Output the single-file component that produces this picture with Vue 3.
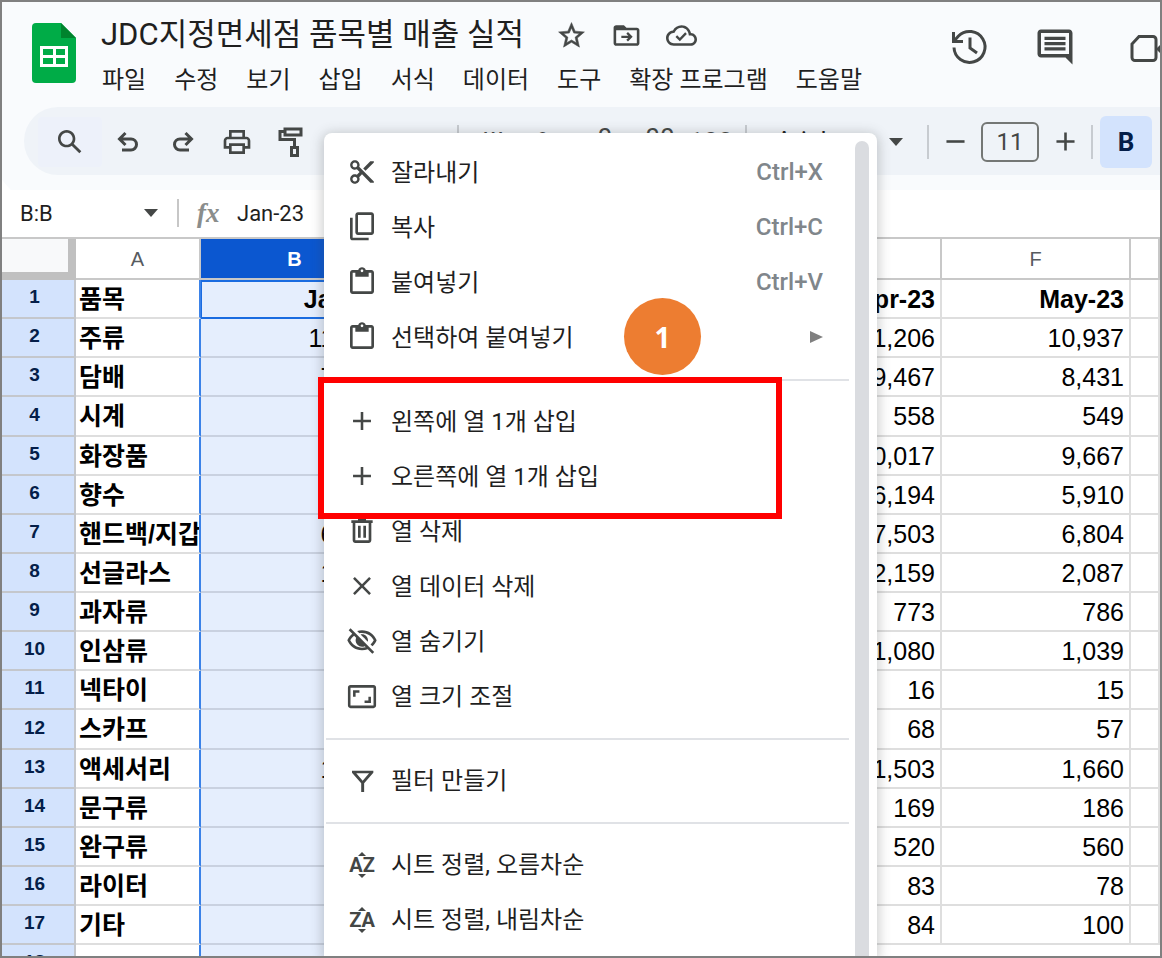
<script setup>
import { ref } from 'vue'

const menus = ['파일', '수정', '보기', '삽입', '서식', '데이터', '도구', '확장 프로그램', '도움말']

const rows = [
  ['품목', 'Jan-23', 'Apr-23', 'May-23'],
  ['주류', '11,206', '11,206', '10,937'],
  ['담배', '7,467', '9,467', '8,431'],
  ['시계', '558', '558', '549'],
  ['화장품', '9,017', '10,017', '9,667'],
  ['향수', '6,194', '6,194', '5,910'],
  ['핸드백/지갑', '6,503', '7,503', '6,804'],
  ['선글라스', '1,159', '2,159', '2,087'],
  ['과자류', '773', '773', '786'],
  ['인삼류', '980', '1,080', '1,039'],
  ['넥타이', '16', '16', '15'],
  ['스카프', '68', '68', '57'],
  ['액세서리', '1,503', '1,503', '1,660'],
  ['문구류', '169', '169', '186'],
  ['완구류', '520', '520', '560'],
  ['라이터', '83', '83', '78'],
  ['기타', '84', '84', '100'],
  ['', '', '', ''],
]

const groups = [
  [
    { icon: 'cut', label: '잘라내기', key: 'Ctrl+X' },
    { icon: 'copy', label: '복사', key: 'Ctrl+C' },
    { icon: 'paste', label: '붙여넣기', key: 'Ctrl+V' },
    { icon: 'paste', label: '선택하여 붙여넣기', sub: true },
  ],
  [
    { icon: 'plus', label: '왼쪽에 열 1개 삽입' },
    { icon: 'plus', label: '오른쪽에 열 1개 삽입' },
    { icon: 'trash', label: '열 삭제' },
    { icon: 'close', label: '열 데이터 삭제' },
    { icon: 'hide', label: '열 숨기기' },
    { icon: 'resize', label: '열 크기 조절' },
  ],
  [{ icon: 'filter', label: '필터 만들기' }],
  [
    { sort: 'AZ', label: '시트 정렬, 오름차순' },
    { sort: 'ZA', label: '시트 정렬, 내림차순' },
  ],
]

const boxes = {
  cut: '-1.5 -1.5 27 27',
  plus: '-0.5 -0.5 25 25',
  close: '-0.5 -0.5 25 25',
  resize: '-0.5 -1 25 25',
}

const paths = {
  cut: 'M9.64 7.64c.23-.5.36-1.05.36-1.64 0-2.21-1.79-4-4-4S2 3.79 2 6s1.79 4 4 4c.59 0 1.14-.13 1.64-.36L10 12l-2.36 2.36C7.14 14.13 6.59 14 6 14c-2.21 0-4 1.79-4 4s1.79 4 4 4 4-1.79 4-4c0-.59-.13-1.14-.36-1.64L12 14l7 7h3v-1L9.64 7.64zM6 8c-1.1 0-2-.89-2-2s.9-2 2-2 2 .89 2 2-.9 2-2 2zm0 12c-1.1 0-2-.89-2-2s.9-2 2-2 2 .89 2 2-.9 2-2 2zM19 3l-6 6 2 2 7-7V3z',
  copy: 'M19 1H9C7.9 1 7 1.9 7 3v13c0 1.1.9 2 2 2h10c1.1 0 2-.9 2-2V3c0-1.1-.9-2-2-2zm0 15H9V3h10v13zM3 5v15c0 1.1.9 2 2 2h12v-2H5V5H3z',
  paste: 'M19 3h-4.18C14.4 1.84 13.3 1 12 1s-2.4.84-2.82 2H5c-1.1 0-2 .9-2 2v14c0 1.1.9 2 2 2h14c1.1 0 2-.9 2-2V5c0-1.1-.9-2-2-2zm-7-.4c.6 0 1 .4 1 1s-.4 1-1 1-1-.4-1-1 .4-1 1-1zM19 19H5V5h2v3h10V5h2v14z',
  plus: 'M19 13h-6v6h-2v-6H5v-2h6V5h2v6h6v2z',
  trash: 'M15 4V3H9v1H4v2h1v13c0 1.1.9 2 2 2h10c1.1 0 2-.9 2-2V6h1V4h-5zm2 15H7V6h10v13zM9 8h2v9H9zm4 0h2v9h-2z',
  close: 'M19 6.41L17.59 5 12 10.59 6.41 5 5 6.41 10.59 12 5 17.59 6.41 19 12 13.41 17.59 19 19 17.59 13.41 12z',
  hide: 'M12 6c3.79 0 7.17 2.13 8.82 5.5-.59 1.22-1.42 2.27-2.41 3.12l1.41 1.41c1.39-1.23 2.49-2.77 3.18-4.53C21.27 7.11 17 4 12 4c-1.27 0-2.49.2-3.64.57l1.65 1.65C10.66 6.09 11.32 6 12 6zm-1.07 1.14L13 9.21c.57.25 1.03.71 1.28 1.28l2.07 2.07c.08-.34.14-.7.14-1.07C16.5 9.01 14.48 7 12 7c-.37 0-.72.05-1.07.14zM2.01 3.87l2.68 2.68C3.06 7.83 1.77 9.53 1 11.5 2.73 15.89 7 19 12 19c1.52 0 2.98-.29 4.32-.82l3.42 3.42 1.41-1.41L3.42 2.45 2.01 3.87zm4.1 4.1l1.5 1.5c-.3.8-.4 1.3-.4 2 0 2.6 2.1 4.8 4.8 4.8.7 0 1.3-.1 2-.4l.8.8c-.9.2-1.9.33-2.81.33-3.79 0-7.17-2.13-8.82-5.5.7-1.43 1.72-2.61 2.93-3.53z',
  resize: 'M19 12h-2v3h-3v2h5v-5zM7 9h3V7H5v5h2V9zm14-6H3c-1.1 0-2 .9-2 2v14c0 1.1.9 2 2 2h18c1.1 0 2-.9 2-2V5c0-1.1-.9-2-2-2zm0 16H3V5h18v14z',
  filter: 'M4.5 5h16v1.5l-6.900 8V21h-2.200v-6.500l-6.900-8zm3.200 2l4.800 5.600L17.300 7z',
}

const fontSize = ref('11')
</script>

<template>
  <div class="frame">
    <header class="header">
      <svg class="logo" viewBox="0 0 44 60" aria-hidden="true">
        <path d="M4 0h25l15 15v41a4 4 0 0 1-4 4H4a4 4 0 0 1-4-4V4a4 4 0 0 1 4-4z" fill="#00ac47" />
        <path d="M29 0l15 15H29z" fill="#00832d" />
        <path d="M8 23h28v21H8zM11 26v6h10v-6zM24 26v6h9v-6zM11 35v6h10v-6zM24 35v6h9v-6z" fill="#fff" fill-rule="evenodd" />
      </svg>
      <div class="heading">
        <div class="title-row">
          <h1>JDC지정면세점 품목별 매출 실적</h1>
          <button aria-label="별표">
            <svg width="31" height="31" viewBox="0 0 24 24"><path d="M22 9.24l-7.19-.62L12 2 9.19 8.63 2 9.24l5.46 4.73L5.82 21 12 17.27 18.18 21l-1.63-7.03L22 9.24zM12 15.4l-3.76 2.27 1-4.28-3.32-2.88 4.38-.38L12 6.1l1.71 4.04 4.38.38-3.32 2.88 1 4.28L12 15.4z" stroke="#444746" stroke-width="0.4" /></svg>
          </button>
          <button aria-label="이동">
            <svg width="31" height="31" viewBox="0 0 24 24"><path d="M20 6h-8l-2-2H4c-1.1 0-2 .9-2 2v12c0 1.1.9 2 2 2h16c1.1 0 2-.9 2-2V8c0-1.1-.9-2-2-2zm0 12H4V8h16v10z" fill-rule="evenodd" /><path d="M8 13h7M12.5 10l3 3-3 3" fill="none" stroke="#444746" stroke-width="1.8" /></svg>
          </button>
          <button aria-label="드라이브에 저장됨">
            <svg width="31" height="31" viewBox="0 0 24 24"><path d="M19.35 10.04C18.67 6.59 15.64 4 12 4 9.11 4 6.6 5.64 5.35 8.04 2.34 8.36 0 10.91 0 14c0 3.31 2.69 6 6 6h13c2.76 0 5-2.24 5-5 0-2.64-2.05-4.78-4.65-4.96zM19 18H6c-2.21 0-4-1.79-4-4 0-2.05 1.53-3.76 3.56-3.97l1.07-.11.5-.95C8.08 7.14 9.94 6 12 6c2.62 0 4.88 1.86 5.39 4.43l.3 1.5 1.53.11c1.56.1 2.78 1.41 2.78 2.96 0 1.65-1.35 3-3 3z" /><path d="M8 12.5l2.7 2.7 4.8-5" fill="none" stroke="#444746" stroke-width="1.8" /></svg>
          </button>
        </div>
        <nav class="menubar">
          <button v-for="m in menus" :key="m">{{ m }}</button>
        </nav>
      </div>
      <div class="actions">
        <button aria-label="버전 기록">
          <svg class="line" width="42" height="42" viewBox="0 0 42 42">
            <path d="M4 21.5a15.5 15.5 0 1 0 4.500-11.500L4 15" /><path d="M3.500 6v9.500H13" /><path d="M20 11.500v10.500l7 5" />
          </svg>
        </button>
        <button aria-label="댓글">
          <svg width="42" height="42" viewBox="0 0 24 24"><path d="M21.99 4c0-1.1-.89-2-1.99-2H4c-1.1 0-2 .9-2 2v12c0 1.1.9 2 2 2h14l4 4-.01-18zM20 4v12H4V4h16zM6 12.2h12v1.8H6zm0-3h12v1.8H6zm0-3h12v1.8H6z" fill-rule="evenodd" /></svg>
        </button>
        <button aria-label="화상 회의">
          <svg width="42" height="42" viewBox="0 0 42 42"><path d="M21 10.5h14a3 3 0 0 1 3 3v18a3 3 0 0 1-3 3H17a3 3 0 0 1-3-3V18z" fill="none" stroke="#444746" stroke-width="3" /><path d="M38 23l4-4v8z" /></svg>
        </button>
      </div>
    </header>

    <div class="toolbar">
      <button class="tool search" aria-label="검색">
        <svg width="32" height="32" viewBox="0 0 24 24"><path d="M20.49 19l-5.73-5.73C15.53 12.2 16 10.91 16 9.5 16 5.91 13.09 3 9.5 3S3 5.91 3 9.5 5.91 16 9.5 16c1.41 0 2.7-.47 3.77-1.24L19 20.49 20.49 19zM5 9.5C5 7.01 7.01 5 9.5 5S14 7.01 14 9.5 11.99 14 9.5 14 5 11.99 5 9.5z" /></svg>
      </button>
      <button class="tool" aria-label="실행취소">
        <svg width="30" height="30" viewBox="0 0 30 30" class="line"><path d="M8 23h9a5.5 5.5 0 0 0 0-11H6M11.5 6L5.5 12l6 6" /></svg>
      </button>
      <button class="tool" aria-label="재실행">
        <svg width="30" height="30" viewBox="0 0 30 30" class="line"><path d="M21 23h-9a5.5 5.5 0 0 1 0-11h11M17.5 6l6 6-6 6" /></svg>
      </button>
      <button class="tool" aria-label="인쇄">
        <svg width="32" height="32" viewBox="0 0 24 24"><path d="M19 8h-1V3H6v5H5c-1.66 0-3 1.34-3 3v6h4v4h12v-4h4v-6c0-1.66-1.34-3-3-3zM8 5h8v3H8V5zm8 14H8v-4h8v4zm2-4v-2H6v2H4v-4c0-.55.45-1 1-1h14c.55 0 1 .45 1 1v4h-2z" /></svg>
      </button>
      <button class="tool" aria-label="서식 복사">
        <svg width="30" height="30" viewBox="0 0 30 30" class="line"><path d="M9 2h16v6H9zM9 4.5H4V12.5h14.5v8M15.5 20.5h6v8h-6z" /></svg>
      </button>
      <select class="zoom" aria-label="확대/축소"><option>100%</option></select>
      <span class="sep"></span>
      <button class="tool fmt">₩</button>
      <button class="tool fmt">%</button>
      <button class="tool dec">.0</button>
      <button class="tool dec">.00</button>
      <button class="tool fmt">123</button>
      <span class="sep"></span>
      <div class="font">
        <select aria-label="글꼴"><option>Arial</option></select>
        <svg class="caret" viewBox="0 0 14 8" aria-hidden="true"><path d="M0 0h14L7 8z" /></svg>
      </div>
      <span class="sep"></span>
      <button class="tool step" aria-label="글꼴 크기 줄이기"><svg width="31" height="31" viewBox="0 0 24 24"><path d="M5 11h14v2H5z" /></svg></button>
      <input v-model="fontSize" class="size" aria-label="글꼴 크기" />
      <button class="tool step" aria-label="글꼴 크기 늘리기"><svg width="31" height="31" viewBox="0 0 24 24"><path :d="paths.plus" /></svg></button>
      <span class="sep"></span>
      <button class="tool bold">B</button>
    </div>

    <div class="formula">
      <input class="range" value="B:B" aria-label="이름 상자" />
      <svg class="caret" viewBox="0 0 14 8" aria-hidden="true"><path d="M0 0h14L7 8z" /></svg>
      <span class="fsep"></span>
      <span class="fx">fx</span>
      <input class="value" value="Jan-23" aria-label="수식 입력줄" />
    </div>

    <table class="grid">
      <colgroup>
        <col class="c-num" /><col class="c-a" /><col class="c-wide" /><col class="c-mid" /><col class="c-mid" /><col class="c-mid" /><col class="c-wide" /><col />
      </colgroup>
      <thead>
        <tr><th class="corner"></th><th>A</th><th class="on">B</th><th>C</th><th>D</th><th>E</th><th>F</th><th></th></tr>
      </thead>
      <tbody>
        <tr v-for="(r, i) in rows" :key="i">
          <th scope="row">{{ i + 1 }}</th>
          <td class="name">{{ r[0] }}</td>
          <td class="picked">{{ r[1] }}</td>
          <td></td>
          <td></td>
          <td>{{ r[2] }}</td>
          <td>{{ r[3] }}</td>
          <td></td>
        </tr>
      </tbody>
    </table>

    <div class="context">
      <div v-for="(g, gi) in groups" :key="gi" class="group">
        <button v-for="item in g" :key="item.label" class="item">
          <span v-if="item.sort" class="sort" aria-hidden="true">
            <svg width="8" height="4" viewBox="0 0 8 4"><path d="M0 4l4-4 4 4z" /></svg>
            <span>{{ item.sort }}</span>
            <svg width="8" height="4" viewBox="0 0 8 4"><path d="M0 0l4 4 4-4z" /></svg>
          </span>
          <svg v-else class="icon" :viewBox="boxes[item.icon] || '0 0 24 24'" aria-hidden="true"><path :d="paths[item.icon]" fill-rule="evenodd" /></svg>
          <span class="label">{{ item.label }}</span>
          <span v-if="item.key" class="key">{{ item.key }}</span>
          <svg v-if="item.sub" class="arrow" viewBox="0 0 13 12" aria-hidden="true"><path d="M0 0l13 6-13 6z" /></svg>
        </button>
      </div>
      <div class="thumb"></div>
      <div class="mark"></div>
      <div class="badge">1</div>
    </div>
  </div>
</template>

<style>
body {
  margin: 0;
}
</style>

<style scoped>
* {
  box-sizing: border-box;
}
.frame {
  position: relative;
  height: 100vh;
  overflow: hidden;
  border: 2px solid #808080;
  background: #fff;
  color: #1f1f1f;
  font-family: Roboto, "Noto Sans CJK KR", sans-serif;
}
button, input, select {
  margin: 0;
  padding: 0;
  border: 0;
  background: none;
  color: inherit;
  font: inherit;
  appearance: none;
}
svg {
  display: block;
  flex: none;
  fill: #444746;
}
.line {
  fill: none;
  stroke: #444746;
  stroke-width: 3;
}
.header {
  display: flex;
  height: 105px;
  padding-left: 30px;
  background: #f9fbfd;
}
.logo {
  width: 44px;
  height: 60px;
  margin-top: 21px;
}
.heading {
  flex: 1;
  margin-left: 25px;
  white-space: nowrap;
}
.title-row {
  display: flex;
  align-items: center;
  gap: 24px;
  height: 60px;
  padding-top: 7px;
}
h1 {
  margin: 0 8px 2px 0;
  font-size: 31px;
  line-height: 40px;
  font-weight: 400;
}
.menubar {
  display: flex;
  gap: 28px;
  padding-left: 1px;
  font-size: 24px;
  line-height: 36px;
}
.actions {
  display: flex;
  gap: 42px;
  height: 90px;
  align-items: center;
}
.toolbar {
  display: flex;
  align-items: center;
  height: 68px;
  padding: 1px 0 0 14px;
  margin-left: 22px;
  border-radius: 34px 0 0 34px;
  background: #eff3f8;
  box-shadow: 0 0 0 34px #f9fbfd;
  clip-path: inset(0 0 -15px -22px);
}
.tool {
  display: flex;
  flex: none;
  align-items: center;
  justify-content: center;
  width: 54px;
  height: 50px;
  color: #444746;
}
.search {
  width: 64px;
  border-radius: 4px;
  background: #edf1fa;
}
.zoom {
  width: 132px;
  padding-left: 20px;
  font-size: 20px;
}
.sep {
  flex: none;
  width: 2px;
  height: 34px;
  margin: 0 7px;
  background: #c7cbd0;
}
.fmt {
  font-size: 26px;
}
.dec {
  width: 55px;
  height: 38px;
  align-items: flex-start;
  font-size: 26px;
}
.font {
  display: flex;
  align-items: center;
  width: 166px;
  padding: 0 17px 0 22px;
}
.font select {
  flex: 1;
  min-width: 0;
  font-size: 25px;
}
.caret {
  width: 14px;
  height: 8px;
}
.step {
  width: 38px;
}
.size {
  width: 58px;
  height: 40px;
  margin: 0 7px;
  border: 2px solid #747775;
  border-radius: 6px;
  color: #444746;
  font-size: 24px;
  text-align: center;
}
.bold {
  width: 52px;
  height: 52px;
  border-radius: 6px;
  background: #d3e3fd;
  color: #041e49;
  font-size: 26px;
  font-weight: 700;
}
.formula {
  display: flex;
  align-items: center;
  height: 62px;
  padding: 14px 0 0 18px;
}
.range {
  width: 124px;
  font-size: 22px;
}
.fsep {
  width: 2px;
  height: 28px;
  margin: 0 18px 0 19px;
  background: #c7c7c7;
}
.fx {
  width: 40px;
  color: #8a8d8c;
  font-family: "Liberation Serif", serif;
  font-size: 27px;
  font-weight: 700;
  font-style: italic;
}
.value {
  flex: 1;
  min-width: 0;
  font-size: 22px;
}
.grid {
  width: 100%;
  table-layout: fixed;
  border-spacing: 0;
  border-top: 2px solid #c8c8c8;
  font-family: "Liberation Sans", "Noto Sans CJK KR", sans-serif;
  font-size: 25px;
  line-height: 34px;
}
.c-num {
  width: 74px;
}
.c-a {
  width: 125px;
}
.c-mid {
  width: 184px;
}
.c-wide {
  width: 189px;
}
.grid th, .grid td {
  height: 39px;
  padding: 0;
  border-right: 2px solid #dedede;
  border-bottom: 2px solid #dedede;
  white-space: nowrap;
}
.grid tr:nth-child(8n + 4) > * {
  height: 40px;
}
.grid thead th {
  height: 41px;
  border-color: #c8c8c8;
  color: #575b5f;
  font-size: 20px;
  font-weight: 400;
}
.grid thead .corner {
  border-right: 8px solid #c0c0c0;
  border-bottom: 8px solid #c0c0c0;
  background: #f8f9fa;
}
.grid thead .on {
  background: #0b57d0;
  color: #fff;
  font-weight: 700;
}
.grid tbody th {
  padding: 0 7px 3px 0;
  border-color: #c4c7cc;
  background: #d3e3fd;
  color: #041e49;
  font-size: 19px;
  line-height: 30px;
}
.grid td {
  padding: 0 5px 0 0;
  color: #000;
  text-align: right;
}
.grid tbody .name {
  overflow: hidden;
  padding: 0 0 0 3px;
  border-right-color: #3b82e8;
  font-weight: 700;
  text-align: left;
}
.grid tbody .picked {
  border-bottom-color: #c9d1e0;
  background: #e5eefd;
}
.grid tbody tr:first-child td {
  font-weight: 700;
}
.grid tbody tr:first-child .picked {
  border-bottom-color: #1a6be0;
  box-shadow: inset 1px 2px #1a6be0;
}
.grid tbody tr:last-child td {
  border-right-color: transparent;
}
.grid tbody tr:last-child .name {
  border-right-color: #3b82e8;
}
.context {
  position: absolute;
  top: 131px;
  bottom: 0;
  left: 322px;
  width: 553px;
  padding: 11px 28px 0 2px;
  border-radius: 8px 8px 0 0;
  background: #fff;
  box-shadow: 0 2px 12px 2px rgba(60, 64, 67, 0.26);
}
.group + .group {
  margin-top: 15px;
  padding-top: 12px;
  border-top: 2px solid #e0e2e6;
}
.item {
  display: flex;
  align-items: center;
  width: 100%;
  height: 55px;
  padding: 0 26px 0 20px;
  font-size: 24px;
  text-align: left;
}
.icon {
  width: 32px;
  height: 32px;
}
.sort {
  display: flex;
  flex-direction: column;
  align-items: center;
  width: 32px;
  padding-top: 3px;
  color: #444746;
  font-size: 20px;
  font-weight: 700;
  line-height: 18px;
}
.label {
  flex: 1;
  margin-left: 13px;
  padding-bottom: 2px;
}
.key {
  color: #80868b;
  font-size: 24px;
  font-weight: 500;
}
.arrow {
  width: 13px;
  height: 12px;
  fill: #808080;
}
.thumb {
  position: absolute;
  top: 8px;
  right: 8px;
  bottom: 0;
  width: 14px;
  border-radius: 7px 7px 0 0;
  background: #dadce0;
}
.mark {
  position: absolute;
  top: 244px;
  left: -6px;
  width: 464px;
  height: 142px;
  border: 6px solid #f00;
}
.badge {
  position: absolute;
  top: 165px;
  left: 300px;
  width: 77px;
  height: 77px;
  border-radius: 50%;
  background: #ed7d31;
  color: #fff;
  font-family: "Noto Sans", sans-serif;
  font-size: 28px;
  font-weight: 700;
  line-height: 79px;
  text-align: center;
}
</style>
